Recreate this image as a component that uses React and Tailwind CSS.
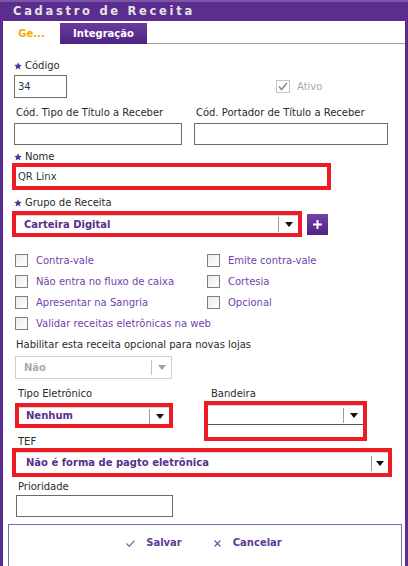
import React from 'react';

const Star = () => (
  <svg width="8" height="8" viewBox="0 0 10 10" className="shrink-0">
    <path d="M5 0.3l1.35 3.2 3.4.3-2.6 2.25.8 3.35L5 7.6 2.05 9.4l.8-3.35L.25 3.8l3.4-.3z" fill="#3d3b9c" />
  </svg>
);

const Arrow = ({ muted }) => (
  <svg width="8" height="5" viewBox="0 0 8 5">
    <path d="M0 0h8L4 5z" fill={muted ? '#a0a0a0' : '#111'} />
  </svg>
);

const Box = ({ label }) => (
  <div className="flex items-center h-[21px]">
    <span className="w-[13px] h-[13px] border border-[#7f7f7f] bg-gradient-to-br from-[#ececec] to-white shrink-0" />
    <span className="ml-[8px] text-[#7044ad]">{label}</span>
  </div>
);

const SelectInner = ({ value, pl, area }) => (
  <div className="flex items-center h-full w-full border-t border-[#d4d4d4]">
    <span className={`flex-1 font-bold text-[#5b2d91] ${pl}`}>{value}</span>
    <span className="w-px h-[15px] bg-[#9c9c9c]" />
    <span className={`flex justify-center ${area}`}><Arrow /></span>
  </div>
);

export default function App() {
  return (
    <div className="w-[408px] h-[566px] bg-[#5b2d8e] flex flex-col overflow-hidden font-['DejaVu_Sans',sans-serif]">
      {/* title */}
      <div className="h-[21px] shrink-0 flex items-center pl-[13px] border-t-2 border-[#7b55aa] text-[#e4e4e4] font-bold text-[11.5px] tracking-[2.7px]">
        Cadastro de Receita
      </div>

      <div className="flex-1 bg-white mx-[3px] flex flex-col text-[10px] leading-[12px] text-[#2a2a2a]">
        {/* tabs */}
        <div className="h-[23px] flex items-end shrink-0">
          <div className="w-[57px] h-[21px] flex items-center justify-center font-bold text-[#f7a600]">Ge...</div>
          <div className="w-[87px] h-[21px] flex items-center justify-center font-bold text-white bg-gradient-to-b from-[#6a3b9e] to-[#4f2383]">
            Integração
          </div>
          <div className="flex-1 h-full border-b border-[#9aa5a5]" />
        </div>

        {/* Código */}
        <div className="mt-[16px] ml-[11px] h-[12px] flex items-center gap-[3px]">
          <Star />
          <span>Código</span>
        </div>
        <div className="mt-[3px] h-[23px] flex items-center">
          <div className="ml-[11px] w-[53px] h-[23px] border border-[#6b6b6b] flex items-center pl-[3px] text-[#1f3d4f]">34</div>
          <div className="ml-[209px] flex items-center">
            <span className="w-[14px] h-[13px] border border-[#c6c6c6] flex items-center justify-center">
              <svg width="10" height="9" viewBox="0 0 10 9">
                <path d="M1 4.5l2.6 3L9 1" stroke="#8a8a8a" strokeWidth="1.6" fill="none" />
              </svg>
            </span>
            <span className="ml-[7px] text-[#ababab]">Ativo</span>
          </div>
        </div>

        {/* títulos */}
        <div className="mt-[9px] h-[12px] flex">
          <span className="ml-[13px] w-[180px]">Cód. Tipo de Título a Receber</span>
          <span>Cód. Portador de Título a Receber</span>
        </div>
        <div className="mt-[4px] h-[22px] flex">
          <div className="ml-[11px] w-[168px] h-[22px] border border-[#6b6b6b]" />
          <div className="ml-[12px] w-[194px] h-[22px] border border-[#6b6b6b]" />
        </div>

        {/* Nome */}
        <div className="mt-[6px] ml-[11px] h-[12px] flex items-center gap-[3px]">
          <Star />
          <span>Nome</span>
        </div>
        <div className="ml-[9px] w-[319px] h-[27px] border-4 border-[#ed1c24] flex items-center pl-[2px] text-[#1f3d4f]">
          QR Linx
        </div>

        {/* Grupo */}
        <div className="mt-[7px] ml-[11px] h-[12px] flex items-center gap-[3px]">
          <Star />
          <span>Grupo de Receita</span>
        </div>
        <div className="mt-[2px] flex items-center">
          <div className="ml-[9px] w-[290px] h-[26px] border-4 border-[#ed1c24]">
            <SelectInner value="Carteira Digital" pl="pl-[8px]" area="w-[19px]" />
          </div>
          <div className="ml-[5px] w-[21px] h-[21px] bg-gradient-to-b from-[#7144a8] to-[#4e2384] flex items-center justify-center">
            <svg width="11" height="11" viewBox="0 0 11 11">
              <path d="M5.5 1v9M1 5.5h9" stroke="#fff" strokeWidth="2" />
            </svg>
          </div>
        </div>

        {/* checkboxes */}
        <div className="mt-[13px] ml-[12px] grid grid-cols-[192px_1fr]">
          <Box label="Contra-vale" />
          <Box label="Emite contra-vale" />
          <Box label="Não entra no fluxo de caixa" />
          <Box label="Cortesia" />
          <Box label="Apresentar na Sangria" />
          <Box label="Opcional" />
          <div className="col-span-2">
            <Box label="Validar receitas eletrônicas na web" />
          </div>
        </div>

        <div className="mt-[5px] ml-[13px] h-[12px]">Habilitar esta receita opcional para novas lojas</div>
        <div className="mt-[5px] ml-[12px] w-[157px] h-[23px] border border-[#cfcfcf] flex items-center">
          <span className="flex-1 pl-[8px] font-bold text-[#ababab]">Não</span>
          <span className="w-px h-[15px] bg-[#c4c4c4]" />
          <span className="w-[19px] flex justify-center"><Arrow muted /></span>
        </div>

        {/* Tipo / Bandeira */}
        <div className="mt-[9px] h-[12px] flex">
          <span className="ml-[15px] w-[193px]">Tipo Eletrônico</span>
          <span>Bandeira</span>
        </div>
        <div className="mt-[3px] h-[25px] flex items-start">
          <div className="ml-[12px] w-[158px] h-[25px] border-4 border-[#ed1c24]">
            <SelectInner value="Nenhum" pl="pl-[7px]" area="w-[19px]" />
          </div>
          <div className="ml-[31px] -mt-[2px] w-[163px] h-[40px] border-4 border-[#ed1c24] flex flex-col">
            <div className="h-[20px] border-b border-[#555]">
              <SelectInner value="" pl="" area="w-[19px]" />
            </div>
          </div>
        </div>

        {/* TEF */}
        <div className="mt-[8px] ml-[15px] h-[12px]">TEF</div>
        <div className="ml-[9px] w-[380px] h-[29px] border-4 border-[#ed1c24]">
          <SelectInner value="Não é forma de pagto eletrônica" pl="pl-[10px]" area="w-[16px]" />
        </div>

        {/* Prioridade */}
        <div className="mt-[4px] ml-[15px] h-[12px]">Prioridade</div>
        <div className="mt-[2px] ml-[13px] w-[157px] h-[22px] border border-[#6b6b6b]" />

        {/* botões */}
        <div className="mt-[7px] ml-[5px] w-[394px] h-[50px] shrink-0 border border-[#8466b3] flex justify-center pt-[12px] pr-[2px] font-bold text-[#5b3a98]">
          <div className="flex items-center h-[12px]">
            <svg width="9" height="7" viewBox="0 0 9 7">
              <path d="M0.5 3.5l2.8 2.8L8.5 0.7" stroke="#6a4aa6" strokeWidth="1.1" fill="none" />
            </svg>
            <span className="ml-[11px]">Salvar</span>
          </div>
          <div className="ml-[32px] flex items-center h-[12px]">
            <svg width="7" height="7" viewBox="0 0 7 7">
              <path d="M0.5 0.5l6 6M6.5 0.5l-6 6" stroke="#6a4aa6" strokeWidth="1.1" />
            </svg>
            <span className="ml-[12px]">Cancelar</span>
          </div>
        </div>
      </div>
    </div>
  );
}
